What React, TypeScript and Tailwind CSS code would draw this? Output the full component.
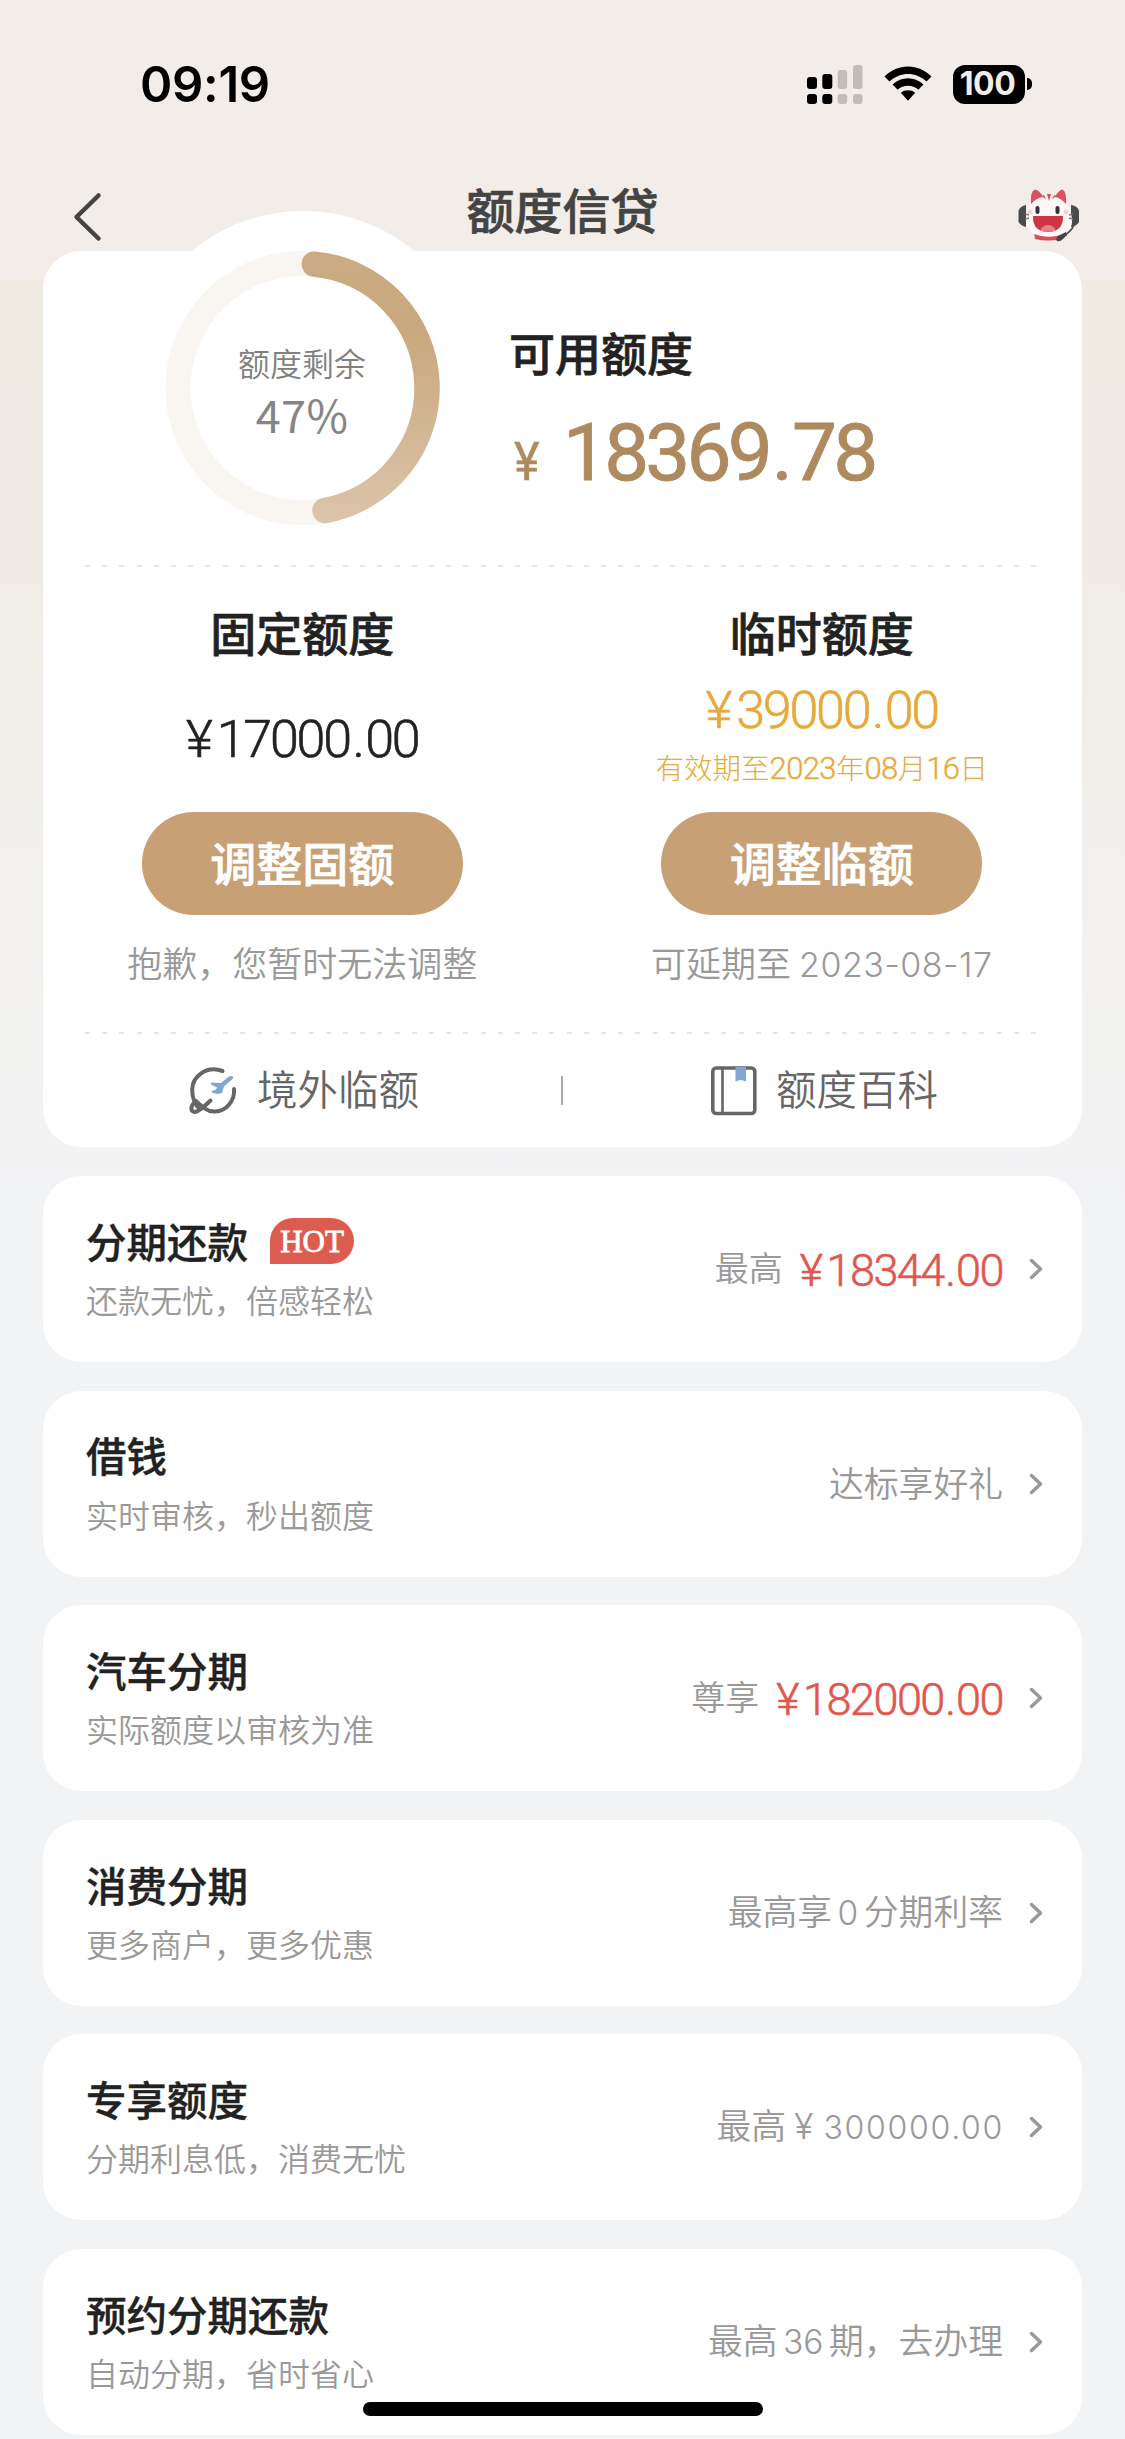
import React from "react";

type Product = {
  title: string;
  desc: string;
  hot?: boolean;
  value: React.ReactNode;
};

const PRODUCTS: Product[] = [
  {
    title: "分期还款",
    desc: "还款无忧，倍感轻松",
    hot: true,
    value: <Amount label="最高" amount="18344"/>,
  },
  {title: "借钱", desc: "实时审核，秒出额度", value: <Note>达标享好礼</Note>},
  {
    title: "汽车分期",
    desc: "实际额度以审核为准",
    value: <Amount label="尊享" amount="182000"/>,
  },
  {
    title: "消费分期",
    desc: "更多商户，更多优惠",
    value: <Note>最高享<Digits>0</Digits>分期利率</Note>,
  },
  {
    title: "专享额度",
    desc: "分期利息低，消费无忧",
    value: (
      <Note>
        最高<span className="ml-[8px] mr-[10px] font-['Inter'] text-[36px]">¥</span>
        <span className="font-['Inter'] text-[32px] tracking-[1.7px] -mr-px">300000.00</span>
      </Note>
    ),
  },
  {
    title: "预约分期还款",
    desc: "自动分期，省时省心",
    value: <Note>最高<Digits>36</Digits>期，去办理</Note>,
  },
];

function Digits({children}: {children: React.ReactNode}) {
  return <span className="mx-[5.5px] font-['Inter'] text-[33.5px]">{children}</span>;
}

function ShortDigits({children}: {children: React.ReactNode}) {
  return (
    <span className="font-['Roboto'] font-light text-[31px] leading-none tracking-[-0.6px] [-webkit-text-stroke:0.4px]">
      {children}
    </span>
  );
}

function Note({children}: {children: React.ReactNode}) {
  return <p className="pb-[3px] font-[350] text-[34.8px] leading-none text-[#999] whitespace-nowrap">{children}</p>;
}

function Amount({label, amount}: {label: string; amount: string}) {
  return (
    <>
      <span className="pb-[4px] font-[350] text-[34px] leading-none text-[#999]">{label}</span>
      <span className="ml-[17px] pt-[3px] font-['Roboto'] font-light text-[45px] leading-none tracking-[-1.5px] text-[#e0574f] [-webkit-text-stroke:0.6px]">
        <span className="mr-[5px]">¥</span>{amount}<span className="mx-[1.5px]">.</span>00
      </span>
    </>
  );
}

const StatusBar = () => (
  <div className="h-[168px] shrink-0 flex items-center justify-between pl-[140px] pr-[93px]">
    <span className="font-['Inter'] font-semibold text-[49px] leading-none tracking-[-0.3px] text-black">09:19</span>
    <div className="flex items-center gap-[21px]">
      <svg width="56" height="39" viewBox="0 0 56 39">
        <g fill="#000">
          <rect x="0" y="12" width="10" height="12" rx="3"/>
          <rect x="15.3" y="9" width="10" height="15" rx="3"/>
          <rect x="0" y="29" width="10" height="10" rx="3"/>
          <rect x="15.3" y="29" width="10" height="10" rx="3"/>
        </g>
        <g fill="#c1beb9">
          <rect x="30.7" y="5" width="9.5" height="19" rx="3"/>
          <rect x="46" y="0" width="9.5" height="24" rx="3"/>
          <rect x="30.7" y="29" width="9.5" height="10" rx="3"/>
          <rect x="46" y="29" width="9.5" height="10" rx="3"/>
        </g>
      </svg>
      <svg width="48" height="36" viewBox="0 0 48 36">
        <path d="M0.5 10.5 C13.5 -3 34.5 -3 47.5 10.5 L42.5 15.5 C32 5.5 16 5.5 5.5 15.5 Z"/>
        <path d="M8.5 18.5 C17.5 10.2 30.5 10.2 39.5 18.5 L34.5 23.6 C28.5 18.3 19.5 18.3 13.5 23.6 Z"/>
        <path d="M16.8 26.8 C21 23.5 27 23.5 31.2 26.8 L24 34.8 Z"/>
      </svg>
      <div className="flex items-center gap-[2px]">
        <div className="w-[72px] h-[39px] rounded-[12px] bg-black flex items-center justify-center pr-[3px] font-['Inter'] font-bold text-[32px] leading-none tracking-[-0.5px] text-[#f2ede8]">
          100
        </div>
        <div className="w-[5px] h-[12px] rounded-r-full bg-black"/>
      </div>
    </div>
  </div>
);

const CatIcon = () => (
  <svg width="62" height="54" viewBox="0 0 62 54">
    <path d="M8 17 Q2 18 0.5 23 L0.5 34 Q3 38 8 39 Z M53 17 Q60 18 61 23 L61 34 Q59 38 53 39 Z" fill="#4b4a4c"/>
    <path d="M16 45 Q31 52 46 45 L43 51 Q30 54 17 51 Z" fill="#dc4a5c"/>
    <path d="M31 7 C46 7 53 18 54 31 C55 43 46 48.5 31 48.5 C16 48.5 7 43 8 31 C9 18 16 7 31 7 Z" fill="#fdf8f6"/>
    <path d="M13 16 Q12 3 17 1.5 Q22 2.5 25 9 Q18 10 13 16 Z M37 9 Q40 2.5 44.5 1.5 Q49 4 48 16 Q43 10 37 9 Z" fill="#dc5064"/>
    <path d="M29 6 L33 6 L31 13 Z M23.5 8 L26 7 L28 11.5 Z M36 7 L38.5 8 L34 11.5 Z" fill="#dc4a5c"/>
    <rect x="17.5" y="18" width="4" height="8" rx="2" fill="#333"/>
    <rect x="37.5" y="18" width="4" height="8" rx="2" fill="#333"/>
    <path d="M7 26 L11 27 M7 31 L11 30 M55 26 L51 27 M55 31 L51 30" stroke="#777" strokeWidth="1.3"/>
    <circle cx="12" cy="24" r="2.5" fill="#f6cfd0"/>
    <circle cx="48" cy="24" r="2.5" fill="#f6cfd0"/>
    <path d="M15 28 L45 28 Q45.5 43.5 30 44 Q14.5 43.5 15 28 Z" fill="#cf3445"/>
    <path d="M22.5 42.500 Q24 37 30 37 Q36 37 37.500 42.500 Q30 45 22.500 42.500 Z" fill="#e77e88"/>
    <path d="M56 37 Q53 44 44 49" fill="none" stroke="#4b4a4c" strokeWidth="1.8"/>
    <path d="M48 44 L40 48 Q37 51 39 53 Q42 54 45 51 L49 47 Z" fill="#444"/>
  </svg>
);

const Header = () => (
  <header className="h-[83px] shrink-0 flex items-center px-[45px]">
    <div className="flex-1 pt-[14px]">
      <svg width="30" height="50" viewBox="0 0 30 50" className="ml-[28px]" fill="none" stroke="#444" strokeWidth="4.5" strokeLinecap="round" strokeLinejoin="round">
        <path d="M25.5 3.5 L3.5 25 L25.5 46.5"/>
      </svg>
    </div>
    <h1 className="pb-[4px] font-medium text-[48px] leading-none text-[#444] [-webkit-text-stroke:0.7px]">额度信贷</h1>
    <div className="flex-1 flex justify-end pt-[11px]">
      <CatIcon/>
    </div>
  </header>
);

const QuotaRing = () => (
  <div className="relative ml-[122px] w-[274px] h-[274px] flex flex-col items-center">
    <div className="absolute left-[-37px] top-[-40px] w-[350px] h-[350px] rounded-full bg-white"/>
    <svg width="274" height="274" viewBox="0 0 274 274" className="absolute inset-0 overflow-visible" fill="none">
      <defs>
        <linearGradient id="ring" x1="0" y1="0" x2="0" y2="274" gradientUnits="userSpaceOnUse">
          <stop offset="0" stopColor="#cbab83"/>
          <stop offset="0.3" stopColor="#c9a87e"/>
          <stop offset="1" stopColor="#dcc5ab"/>
        </linearGradient>
      </defs>
      <circle cx="137.5" cy="137" r="124.5" stroke="#f9f6f2" strokeWidth="25"/>
      <path d="M149.3 13.1 A124.5 124.5 0 0 1 160 259.5" stroke="url(#ring)" strokeWidth="25.5" strokeLinecap="round"/>
    </svg>
    <span className="relative mt-[95px] font-[350] text-[32px] leading-none text-[#808080]">额度剩余</span>
    <span className="relative mt-[13px] text-[45px] leading-none tracking-[0.3px] text-[#858585]">47%</span>
  </div>
);

const Dashes = () => (
  <div className="mx-[42px] h-[2px] bg-[repeating-linear-gradient(90deg,#e6e6e6_0_5px,transparent_5px_17.2px)]"/>
);

type QuotaColumnProps = {
  title: string;
  button: string;
  hint: React.ReactNode;
  children: React.ReactNode;
};

const QuotaColumn: React.FC<QuotaColumnProps> = ({title, button, hint, children}) => (
  <div className="flex-1 flex flex-col items-center pr-px">
    <h2 className="mt-[41px] font-medium text-[46px] leading-none text-[#222] [-webkit-text-stroke:0.7px]">{title}</h2>
    <div className="h-[158px] w-full flex flex-col items-center">{children}</div>
    <button className="w-[321px] h-[103px] pb-[5px] rounded-full bg-[#c7a175] text-white font-medium text-[46px] leading-none [-webkit-text-stroke:0.7px]">
      {button}
    </button>
    <p className="mt-[29px] font-[350] text-[35px] leading-none text-[#999] whitespace-nowrap">{hint}</p>
  </div>
);

const GlobeIcon = () => (
  <svg width="50" height="50" viewBox="0 0 50 50" fill="none" strokeLinecap="round" strokeLinejoin="round">
    <path d="M34.5 5 C18 -1 4 11 4.2 24 C4.3 33 7 39 12 43" stroke="#666" strokeWidth="4"/>
    <path d="M46 23 C47 34 39 45 27 45.5 C19 46 13 40 8 35 C2 40 2 46 7 46 C12 45 17 40 22.5 34.5" stroke="#666" strokeWidth="4"/>
    <path d="M44 10 Q46 11 44.5 13 L36 20.5 L34 27 L30 28 L25 27 L23 25.5 L28 23.5 L29 21.5 L23 18.5 L23 16.5 L33 17 L41 10.5 Z" fill="#83a5d2"/>
  </svg>
);

const BookIcon = () => (
  <svg width="46" height="50" viewBox="0 0 46 50" fill="none">
    <rect x="1.8" y="2" width="42" height="45.5" rx="3.5" stroke="#666" strokeWidth="3.6"/>
    <path d="M11.5 2 V47" stroke="#666" strokeWidth="2.6"/>
    <path d="M24.5 1 H35 V15.5 L29.7 13.8 L24.5 15.5 Z" fill="#83a5d2"/>
  </svg>
);

const QuotaCard = () => (
  <section className="h-[896px] shrink-0 rounded-[38px] bg-white flex flex-col">
    <div className="h-[314px] flex">
      <QuotaRing/>
      <div className="relative ml-[70px]">
        <h2 className="mt-[77px] font-medium text-[46px] leading-none text-[#222] [-webkit-text-stroke:0.7px]">可用额度</h2>
        <div className="mt-[39px] flex items-baseline font-['Roboto'] leading-none text-[#ae8a5e]">
          <span className="ml-[5px] w-[49px] origin-left scale-x-[0.9] text-[54px] [-webkit-text-stroke:0.5px]">¥</span>
          <span className="text-[80px] tracking-[-3.8px] [-webkit-text-stroke:0.9px]">18369<span className="mx-[3px]">.</span>78</span>
        </div>
      </div>
    </div>
    <Dashes/>
    <div className="h-[465px] flex">
      <QuotaColumn title="固定额度" button="调整固额" hint="抱歉，您暂时无法调整">
        <p className="mt-[60px] font-['Roboto'] font-light text-[52px] leading-none tracking-[-2.2px] text-[#222] [-webkit-text-stroke:0.6px]">
          <span className="mr-[6px]">¥</span>17000<span className="mx-[2.5px]">.</span>00
        </p>
      </QuotaColumn>
      <QuotaColumn
        title="临时额度"
        button="调整临额"
        hint={<>可延期至<span className="ml-[8px] font-['Inter'] text-[34px] tracking-[0.5px]">2023-08-17</span></>}
      >
        <p className="mt-[31px] font-['Roboto'] font-light text-[52px] leading-none tracking-[-2.2px] text-[#e6aa3b] [-webkit-text-stroke:0.6px]">
          <span className="mr-[6px]">¥</span>39000<span className="mx-[2.5px]">.</span>00
        </p>
        <p className="mt-[16px] font-light text-[28.5px] leading-none text-[#e6aa3b] whitespace-nowrap">
          有效期至<ShortDigits>2023</ShortDigits>年<ShortDigits>08</ShortDigits>月<ShortDigits>16</ShortDigits>日
        </p>
      </QuotaColumn>
    </div>
    <Dashes/>
    <div className="h-[113px] flex items-center font-[350] text-[40.5px] leading-none text-[#666]">
      <div className="flex-1 flex items-center justify-center gap-[19px] pl-[3px]">
        <GlobeIcon/><span className="pb-[5px]">境外临额</span>
      </div>
      <div className="w-[2px] h-[29px] bg-[#aaa]"/>
      <div className="flex-1 flex items-center justify-center gap-[19px] pl-[4px]">
        <BookIcon/><span className="pb-[5px]">额度百科</span>
      </div>
    </div>
  </section>
);

const ProductCard: React.FC<Product> = ({title, desc, hot, value}) => (
  <article className="h-[186px] shrink-0 rounded-[38px] bg-white flex items-center justify-between pl-[43px] pr-[38px]">
    <div className="pb-[5px]">
      <div className="h-[46px] flex items-center gap-[22px]">
        <h3 className="font-medium text-[40.5px] leading-none text-[#222] [-webkit-text-stroke:0.4px]">{title}</h3>
        {hot && (
          <span className="w-[84px] h-[46px] rounded-[23px] rounded-bl-none bg-[#dc5d50] flex items-center justify-center font-['Liberation_Serif'] text-[31px] leading-none text-white [-webkit-text-stroke:0.8px]">
            HOT
          </span>
        )}
      </div>
      <p className="mt-[19px] font-[350] text-[32px] leading-none text-[#999]">{desc}</p>
    </div>
    <div className="flex items-center">
      {value}
      <svg width="15" height="22" viewBox="0 0 15 22" className="ml-[26px]" fill="none" stroke="#999" strokeWidth="3.5" strokeLinecap="round" strokeLinejoin="round">
        <path d="M2.5 2.5 L11.5 11 L2.5 19.5"/>
      </svg>
    </div>
  </article>
);

const App = () => (
  <div className="relative w-[1125px] h-[2439px] overflow-hidden flex flex-col bg-[linear-gradient(180deg,#f2ede8_0,#f2ede8_279px,#f0ebe3_280px,#f0ece6_600px,#f3f2f0_1000px,#f2f3f5_1200px)] font-['Noto_Sans_CJK_SC',sans-serif]">
    <StatusBar/>
    <Header/>
    <main className="px-[43px] flex flex-col">
      <QuotaCard/>
      <div className="mt-[29px] flex flex-col gap-[28.6px]">
        {PRODUCTS.map((product) => <ProductCard key={product.title} {...product}/>)}
      </div>
    </main>
    <div className="absolute left-[363px] top-[2402px] w-[400px] h-[14px] rounded-full bg-black"/>
  </div>
);

export default App;
